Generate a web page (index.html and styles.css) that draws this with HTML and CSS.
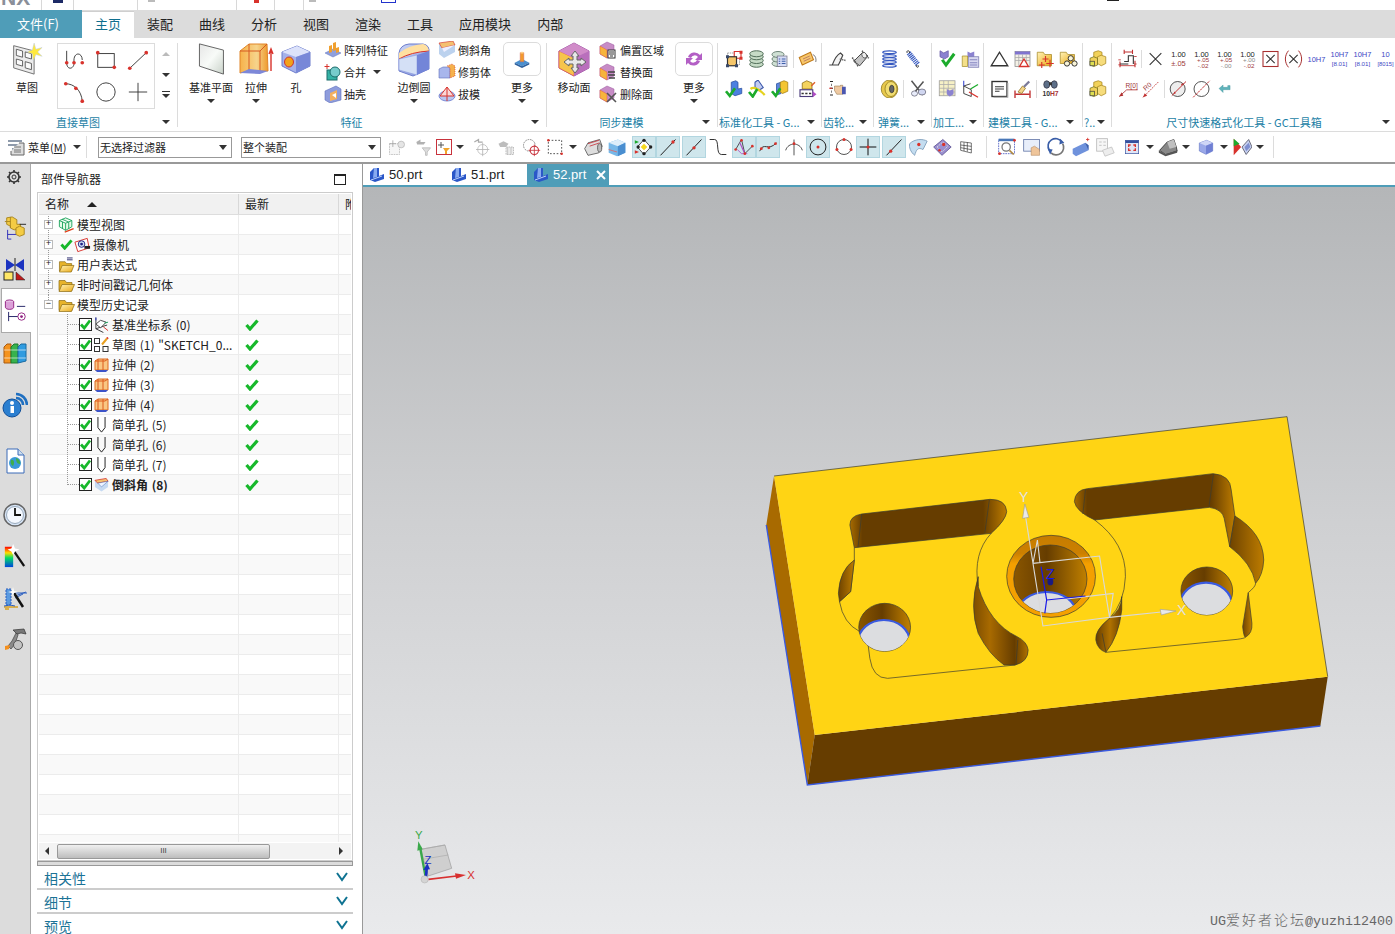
FILE: index.html
```html
<!DOCTYPE html>
<html lang="zh">
<head>
<meta charset="utf-8">
<title>NX</title>
<link rel="stylesheet" href="styles.css">
</head>
<body>
<svg class="defs" aria-hidden="true">
<defs>
<linearGradient id="gO" x1="0" y1="0" x2="1" y2="0"><stop offset="0" stop-color="#f7b24a"/><stop offset=".6" stop-color="#f6d48c"/><stop offset="1" stop-color="#ee9a2c"/></linearGradient>
<linearGradient id="gB" x1="0" y1="0" x2="1" y2="1"><stop offset="0" stop-color="#cdd6f4"/><stop offset="1" stop-color="#7d8fdc"/></linearGradient>
<linearGradient id="gY" x1="0" y1="0" x2="0" y2="1"><stop offset="0" stop-color="#ffe9a0"/><stop offset="1" stop-color="#e2a91c"/></linearGradient>
<linearGradient id="gF" x1="0" y1="0" x2="1" y2="1"><stop offset="0" stop-color="#fff3b8"/><stop offset="1" stop-color="#eba813"/></linearGradient>
<linearGradient id="gP" x1="0" y1="0" x2="1" y2="1"><stop offset="0" stop-color="#e6e6e6"/><stop offset=".5" stop-color="#f8fbf8"/><stop offset="1" stop-color="#c9d2c9"/></linearGradient>
<linearGradient id="gRb" x1="0" y1="0" x2="0" y2="1"><stop offset="0" stop-color="#f00"/><stop offset=".3" stop-color="#fd0"/><stop offset=".55" stop-color="#0d6"/><stop offset="1" stop-color="#04d"/></linearGradient>

<symbol id="sketch" viewBox="0 0 32 36"><path d="M1 3 24 9V35L1 28Z" fill="#ececec" stroke="#666"/><path d="M4 7 11 9V16L4 14ZM14 10 21 12V18L14 16ZM4 18 11 20V26L4 24ZM14 21 21 23V30L14 28Z" fill="#fafafa" stroke="#555"/><path d="M24 0 26 7 33 5 28 10 33 15 26 13 23 20 22 12 16 10 22 8Z" fill="#ffe93c" stroke="#b7c6e6" stroke-width=".5"/></symbol>
<symbol id="g-spline" viewBox="0 0 24 24"><path d="M4 2V15C4 24 13 22 12 14 11 3 21 3 21 12" fill="none" stroke="#333"/><g fill="#d8322c"><circle cx="4" cy="15" r="2"/><circle cx="12" cy="15" r="2"/><circle cx="21" cy="15" r="2"/></g></symbol>
<symbol id="g-rect" viewBox="0 0 24 24"><rect x="3" y="5" width="18" height="15" fill="none" stroke="#333"/><g fill="#d8322c"><circle cx="3" cy="4" r="2"/><circle cx="21" cy="20" r="2"/></g></symbol>
<symbol id="g-line" viewBox="0 0 24 24"><path d="M3 21 21 4" stroke="#333" fill="none"/><g fill="#d8322c"><circle cx="3" cy="21" r="2"/><circle cx="21" cy="4" r="2"/></g></symbol>
<symbol id="g-arc" viewBox="0 0 24 24"><path d="M3 3C12 3 20 10 21 22" stroke="#333" fill="none"/><g fill="#d8322c"><circle cx="3" cy="3" r="2"/><circle cx="14" cy="8" r="2"/><circle cx="21" cy="22" r="2"/></g></symbol>
<symbol id="g-circ" viewBox="0 0 24 24"><circle cx="12" cy="12" r="10" fill="none" stroke="#333"/></symbol>
<symbol id="g-plus" viewBox="0 0 24 24"><path d="M12 2V22M2 12H22" stroke="#333" fill="none"/></symbol>

<symbol id="datum" viewBox="0 0 32 36"><path d="M3 1 30 8V35L3 26Z" fill="url(#gP)" stroke="#555"/></symbol>
<symbol id="extrude" viewBox="0 0 36 36"><path d="M2 10 11 3H29L30 30H11L2 32Z" fill="url(#gO)" stroke="#e0862a"/><path d="M11 3V30M2 10H22L29 3M22 10V31" stroke="#d65a22" fill="none"/><path d="M2 32 11 28 30 30 22 33Z" fill="#7d88d8"/><path d="M33 30V9M31 13 33 8 35 13" stroke="#d8322c" fill="none" stroke-width="1.4"/></symbol>
<symbol id="holeb" viewBox="0 0 32 32"><path d="M2 9 17 3 30 9V23L16 30 2 23Z" fill="#a5b1ea" stroke="#6c7ccc"/><path d="M2 9 16 14 30 9 17 3Z" fill="#dce2fa"/><path d="M16 14V30L30 23V9Z" fill="#7888d8"/><ellipse cx="9" cy="19" rx="4.5" ry="5" fill="#f2a21a" stroke="#c33"/></symbol>
<symbol id="pattern" viewBox="0 0 18 18"><path d="M1 12 9 8 17 12 9 16Z" fill="#8fa0dd" stroke="#5e70bd" stroke-width=".5"/><path d="M5 5 8 4V11L5 12ZM9 2 12 1V9L9 10ZM12 7 15 6V11L12 12Z" fill="#f0a030"/></symbol>
<symbol id="unite" viewBox="0 0 18 18"><rect x="3" y="7" width="10" height="10" fill="#35b3a6" stroke="#1b6c6b"/><circle cx="11" cy="9" r="5" fill="#7cc" stroke="#1b6c6b"/><path d="M3 1V6M.5 3.500H5.500" stroke="#d8322c" fill="none"/></symbol>
<symbol id="shell" viewBox="0 0 18 18"><path d="M1 6 12 1 17 4V15L6 18 1 15Z" fill="#8e9cdc" stroke="#5e70bd" stroke-width=".6"/><path d="M6 8 13 5V14L6 16Z" fill="#f4b060"/><path d="M8 10 12 8V13Z" fill="#fff"/></symbol>
<symbol id="blend" viewBox="0 0 34 36"><path d="M2 12Q3 4 12 3L26 3Q33 4 32 12V28L16 35 2 30Z" fill="url(#gB)" stroke="#6c7ccc"/><path d="M2 12Q12 4 26 3 31 4 32 10 20 10 2 18Z" fill="#ffe0a0"/><path d="M2 18Q14 11 32 10" stroke="#d8322c" fill="none"/><path d="M2 18 20 14V34L2 29Z" fill="#d4e0f6" stroke="#7f8fd8" stroke-width=".5"/><path d="M20 14 32 10V28L20 34Z" fill="#7385d8"/></symbol>
<symbol id="chamfer" viewBox="0 0 18 18"><path d="M1 2 15 0 17 4V11L6 17 1 13Z" fill="#bcd2ee"/><path d="M1 2 15 0 17 4 4 7Z" fill="#f4c070" stroke="#d8322c" stroke-width=".6"/><path d="M4 7 17 4 6 11Z" fill="#eef"/></symbol>
<symbol id="trim" viewBox="0 0 18 18"><path d="M1 6 5 4H12V15H1Z" fill="#a8b6ec" stroke="#5e70bd" stroke-width=".6"/><path d="M9 3 14 1 17 3V13L12 15V5Z" fill="#f5b14d" stroke="#c33" stroke-dasharray="1 1" stroke-width=".6"/></symbol>
<symbol id="draft" viewBox="0 0 18 18"><ellipse cx="9" cy="11" rx="8" ry="5" fill="#b9c6f0" stroke="#7a8bd6"/><path d="M9 2 2 11H16ZM9 2V16" fill="#f9d8d8" stroke="#d8322c"/></symbol>
<symbol id="more1" viewBox="0 0 20 22"><path d="M2 15 10 11 18 15 10 19Z" fill="#4a90d0"/><path d="M2 15 10 19V21L2 17ZM18 15 10 19V21L18 17Z" fill="#2c5e9c"/><path d="M8 4H12V14H8Z" fill="#f39a2c" stroke="#c66" stroke-width=".5"/><ellipse cx="10" cy="4" rx="2" ry="1" fill="#ffcf8a"/></symbol>
<symbol id="move" viewBox="0 0 34 36"><path d="M2 10 17 2 32 10V27L17 35 2 27Z" fill="#dba3cf" stroke="#a055a5"/><path d="M2 10 17 17V35L2 27Z" fill="#f6c54c" stroke="#e25a4a" stroke-width=".7"/><path d="M2 10 17 2 32 10 17 17Z" fill="#d18cc9"/><path d="M32 10V27L17 35V17Z" fill="#b96fbc"/><path d="M18 10 22 15H20V19H24V17L29 21 24 25V23H20V27H22L18 32 14 27H16V23H12V25L7 21 12 17V19H16V15H14Z" fill="#e8e8e8" stroke="#666"/></symbol>
<symbol id="faceA" viewBox="0 0 18 18"><path d="M1 5 8 1 15 4V13L8 17 1 13Z" fill="#c78cc6" stroke="#9a569e" stroke-width=".5"/><path d="M1 5 8 9V17L1 13Z" fill="#f6b43c" stroke="#e25a4a" stroke-width=".5"/><rect x="9" y="9" width="7" height="8" fill="#fff" stroke="#333"/><path d="M10 11H15M10 13H15M11 15H14" stroke="#333" fill="none"/></symbol>
<symbol id="faceB" viewBox="0 0 18 18"><path d="M1 5 8 1 15 4V13L8 17 1 13Z" fill="#c78cc6" stroke="#9a569e" stroke-width=".5"/><path d="M1 5 8 9V17L1 13Z" fill="#f6b43c" stroke="#e25a4a" stroke-width=".5"/><path d="M9 9H16M9 12H16M10 15H16" stroke="#444" stroke-width="1.500" fill="none"/></symbol>
<symbol id="faceC" viewBox="0 0 18 18"><path d="M1 5 8 1 15 4V13L8 17 1 13Z" fill="#c78cc6" stroke="#9a569e" stroke-width=".5"/><path d="M1 5 8 9V17L1 13Z" fill="#f6b43c" stroke="#e25a4a" stroke-width=".5"/><path d="M8 8 17 17M17 8 8 17" stroke="#555" stroke-width="1.600" fill="none"/></symbol>
<symbol id="more2" viewBox="0 0 20 20"><path d="M4 8A7 7 0 0 1 16 6L18 4V11H11L14 8A4 4 0 0 0 7 9ZM16 12A7 7 0 0 1 4 14L2 16V9H9L6 12A4 4 0 0 0 13 11Z" fill="#b35fc5"/></symbol>

<symbol id="st1" viewBox="0 0 24 24"><path d="M4 4H20V20H4Z" fill="none" stroke="#888" stroke-dasharray="2 1"/><path d="M13 2H22V11H13Z" fill="#fff" stroke="#d8322c" stroke-width="1.500"/><rect x="4" y="9" width="12" height="12" fill="#f5c66a" stroke="#333" stroke-width="1.600"/><g fill="#3a4a6a"><rect x="2" y="7" width="4" height="4"/><rect x="14" y="19" width="4" height="4"/><rect x="2" y="19" width="4" height="4"/></g><g fill="#d8322c"><rect x="20" y="1" width="4" height="4"/><rect x="20" y="9" width="4" height="4"/></g></symbol>
<symbol id="st2" viewBox="0 0 24 24"><g fill="#c6dbc6" stroke="#4d6b55" stroke-width="1.300"><ellipse cx="12" cy="19" rx="9" ry="4"/><ellipse cx="12" cy="14" rx="9" ry="4"/><ellipse cx="12" cy="9" rx="9" ry="4"/><ellipse cx="12" cy="5" rx="9" ry="4"/></g></symbol>
<symbol id="st3" viewBox="0 0 24 24"><g fill="#cfe0d4" stroke="#6a8274" stroke-width="1.300"><ellipse cx="10" cy="18" rx="8" ry="4"/><ellipse cx="10" cy="12" rx="8" ry="4"/><ellipse cx="10" cy="6" rx="8" ry="4"/></g><rect x="9" y="8" width="13" height="14" fill="#d6dcf6" stroke="#778"/><path d="M11 12H13M15 12H20M11 15H13M15 15H20M11 18H13M15 18H20" stroke="#3a5da6" stroke-width="1.300" fill="none"/></symbol>
<symbol id="st4" viewBox="0 0 24 24"><path d="M1 10 16 3 20 13 5 20Z" fill="#f8c86a" stroke="#c07a1a" stroke-width="1.400"/><path d="M6 12 15 8M7 15 16 11" stroke="#a66" fill="none"/><path d="M19 6C23 7 24 13 23 16" stroke="#555" fill="none"/></symbol>
<symbol id="st5" viewBox="0 0 24 24"><path d="M9 3 15 1 18 3V12L23 11V18L14 21 9 18Z" fill="#4c80e0" stroke="#2a4e9e"/><path d="M2 15 7 21 14 11" stroke="#1cab2c" stroke-width="3.500" fill="none"/></symbol>
<symbol id="st6" viewBox="0 0 24 24"><path d="M10 3 14 0 21 10 15 14 10 9Z" fill="#c2ccf2" stroke="#3a56a8" stroke-width="1.400"/><path d="M4 12C9 8 17 14 23 20" stroke="#e5d21f" stroke-width="3" fill="none"/><path d="M2 16 7 22 13 12" stroke="#1cab2c" stroke-width="3.500" fill="none"/></symbol>
<symbol id="st7" viewBox="0 0 24 24"><path d="M8 5 14 3V18L8 20Z" fill="#5a86e0" stroke="#2a4e9e"/><path d="M13 3 18 1 23 3V15L16 18 13 16Z" fill="#f4c531" stroke="#a07c10"/><path d="M2 15 7 21 13 11" stroke="#1cab2c" stroke-width="3.500" fill="none"/></symbol>
<symbol id="st8" viewBox="0 0 24 24"><path d="M5 4 11 1 18 4V12H5Z" fill="#f4d35e" stroke="#8a6a12"/><rect x="2" y="13" width="17" height="9" fill="#fff" stroke="#4a3a7a" stroke-width="1.500"/><path d="M4 18H7M9 18H12M14 18H17" stroke="#333" stroke-width="2"/><path d="M19 15 24 19 19 23Z" fill="#b04cc4"/><path d="M17 8 22 3" stroke="#e0602c" stroke-width="2"/></symbol>
<symbol id="ge1" viewBox="0 0 24 24"><path d="M1 20H14M5 20C8 12 12 6 16 4L19 7C17 12 15 17 13 20" fill="#f4f4f4" stroke="#444" stroke-width="1.500"/><path d="M15 12 23 14" stroke="#777" stroke-width="2" stroke-dasharray="2 1"/></symbol>
<symbol id="ge2" viewBox="0 0 24 24"><path d="M3 15 15 3 22 8 11 21Z" fill="#c4c4c4" stroke="#444" stroke-width="1.300"/><path d="M1 10 9 22M14 1 23 11" stroke="#555" fill="none" stroke-width="2" stroke-dasharray="2 1"/><ellipse cx="17" cy="7" rx="3" ry="4" transform="rotate(-30 17 7)" fill="#eee" stroke="#444"/></symbol>
<symbol id="ge3" viewBox="0 0 24 24"><path d="M2 2H6M2 11H6M2 20H6" stroke="#222" stroke-width="1.400" fill="none"/><path d="M4 5V8M4 14V17" stroke="#555"/><path d="M1 11H5" stroke="#d8322c" stroke-width="1.500"/><path d="M8 8H16V7H19V19H11L8 14Z" fill="#eec9a2" stroke="#7a5a30" stroke-width=".6"/><rect x="18" y="9" width="5" height="10" fill="#4a56b0"/></symbol>
<symbol id="sp1" viewBox="0 0 24 24"><g fill="none" stroke="#3558c0" stroke-width="1.800"><ellipse cx="12" cy="3" rx="9" ry="1.800"/><ellipse cx="12" cy="8" rx="9" ry="1.800"/><ellipse cx="12" cy="12" rx="9" ry="1.800"/><ellipse cx="12" cy="16" rx="9" ry="1.800"/><ellipse cx="12" cy="21" rx="9" ry="1.800"/></g></symbol>
<symbol id="sp2" viewBox="0 0 24 24"><path d="M7 4 19 19" stroke="#3558c0" stroke-width="7" stroke-dasharray="1.500 1" fill="none"/><path d="M5 4C3 0 9 0 8 4M19 20C22 24 16 24 17 20" stroke="#333" fill="none" stroke-width="1.300"/></symbol>
<symbol id="sp3" viewBox="0 0 24 24"><ellipse cx="12" cy="12" rx="11" ry="12" fill="#e8c94c" stroke="#8b7418"/><ellipse cx="14" cy="12" rx="8" ry="10" fill="#f2dd70" stroke="#8b7418"/><ellipse cx="15" cy="12" rx="3" ry="5" fill="#666" stroke="#333"/></symbol>
<symbol id="sp4" viewBox="0 0 24 24"><path d="M4 1 19 20M20 2 6 19" stroke="#555" stroke-width="2" fill="none"/><ellipse cx="18" cy="16" rx="5" ry="4" fill="#d0d6f0" stroke="#667"/><ellipse cx="8" cy="18" rx="4" ry="3.500" fill="#e8ecfa" stroke="#667"/></symbol>
<symbol id="ma1" viewBox="0 0 24 24"><path d="M2 1 7 4 13 1V9L8 12 2 9Z" fill="#8b82d0" stroke="#6a5ca6"/><path d="M5 13 10 20 21 5" stroke="#1cab2c" stroke-width="4" fill="none"/></symbol>
<symbol id="ma2" viewBox="0 0 24 24"><path d="M8 2 12 4 17 2V9L12 12 8 9Z" fill="#8b82d0"/><rect x="9" y="9" width="14" height="14" fill="#d8d8f0" stroke="#7a7ab0"/><path d="M1 8H8V22H1Z" fill="#f4e08a" stroke="#a59030"/><path d="M11 13H21M11 17H21M11 20H21" stroke="#6a6ab0"/></symbol>
<symbol id="ma3" viewBox="0 0 24 24"><rect x="1" y="1" width="21" height="20" fill="#f6f0c6" stroke="#999"/><path d="M1 6H22M1 11H22M1 16H22M7 1V21M13 1V21" stroke="#aaa"/><path d="M11 12 15 14 20 12V19L15 22 11 19Z" fill="#8b82d0"/></symbol>
<symbol id="ma4" viewBox="0 0 24 24"><path d="M3 8V18L13 22M3 8 13 13V22M3 8 12 5" fill="none" stroke="#444" stroke-width="1.300"/><path d="M3 1V8" stroke="#2233cc" stroke-width="1.300"/><path d="M12 12 22 6" stroke="#1cab2c" stroke-width="1.800"/><path d="M10 16 22 23" stroke="#d8322c" stroke-width="1.800"/></symbol>
<symbol id="mo1" viewBox="0 0 24 24"><path d="M12 3 23 21H1Z" fill="none" stroke="#333" stroke-width="1.800"/></symbol>
<symbol id="mo2" viewBox="0 0 24 24"><rect x="2" y="2" width="20" height="20" fill="#f3f0e6" stroke="#888"/><rect x="2" y="2" width="20" height="4" fill="#8074d0"/><path d="M2 10H22M2 14H22M7 6V22M12 6V22M17 6V22" stroke="#aaa"/><path d="M14 12 20 22H8Z" fill="#fff" stroke="#d8322c" stroke-width="1.800"/></symbol>
<symbol id="mo3" viewBox="0 0 24 24"><path d="M1 3H9L11 6H20V21H1Z" fill="url(#gF)" stroke="#a68a28"/><path d="M12 8V16M8 12H16M18 13V23M13 18H23M7 16V24M3 20H11" stroke="#d8322c" stroke-width="1.500" fill="none"/></symbol>
<symbol id="mo4" viewBox="0 0 24 24"><path d="M1 3H9L11 6H20V18H1Z" fill="url(#gF)" stroke="#a68a28"/><circle cx="15" cy="11" r="3.500" fill="#f8f4d8" stroke="#333" stroke-width="1.300"/><circle cx="10" cy="18" r="3.500" fill="#f8f4d8" stroke="#333" stroke-width="1.300"/><circle cx="20" cy="18" r="3.500" fill="#f8f4d8" stroke="#333" stroke-width="1.300"/></symbol>
<symbol id="mo5" viewBox="0 0 24 24"><rect x="2" y="2" width="20" height="20" fill="#fff" stroke="#333" stroke-width="1.800"/><path d="M6 9H18M6 12H18M6 15H12" stroke="#333" stroke-width="1.300" fill="none"/><path d="M23 4V23H4" stroke="#aaa" fill="none" stroke-width="1.500"/></symbol>
<symbol id="mo6" viewBox="0 0 24 24"><path d="M2 14V24M22 14V24M3 19H21" stroke="#c03030" stroke-width="1.800"/><path d="M6 16 12 8 16 11 11 18Z" fill="#f2d48a" stroke="#907020"/><path d="M14 9 21 2" stroke="#7a7a9a" stroke-width="3"/></symbol>
<symbol id="mo7" viewBox="0 0 24 24"><ellipse cx="7" cy="6" rx="4" ry="5" fill="#5d6f88" stroke="#334"/><ellipse cx="17" cy="6" rx="4" ry="5" fill="#5d6f88" stroke="#334"/><rect x="10" y="3" width="4" height="4" fill="#333"/><text x="12" y="21" class="t-a" fill="#333" font-size="9" font-weight="700">10<tspan fill="#a33">H7</tspan></text></symbol>
<symbol id="blocks" viewBox="0 0 24 24"><path d="M7 3 13 1 18 3V11L12 13 7 11Z" fill="#f2d25a" stroke="#a8861e"/><path d="M12 9 17 7 23 9V18L17 21 12 18Z" fill="#f6dc7c" stroke="#a8861e"/><path d="M2 11 7 9 12 11V20L7 22 2 20Z" fill="#f2d25a" stroke="#70701e"/><rect x="2" y="15" width="6" height="6" fill="#dde050" stroke="#444"/></symbol>
<symbol id="dim1" viewBox="0 0 24 24"><path d="M3 15V22M21 14V22M8 1V6M18 1V6M8 3.500H18" stroke="#c03030" stroke-width="1.300" fill="none"/><path d="M3 18H13M8 15H13V8H19V18" stroke="#333" fill="none" stroke-width="1.300"/><path d="M1 13H4M1 19H4M3 20H21M20 9H23M20 18H23" stroke="#c03030" fill="none"/></symbol>
<symbol id="dimx" viewBox="0 0 24 24"><path d="M5 5 19 19M19 5 5 19" stroke="#333" stroke-width="1.300" fill="none"/></symbol>
<symbol id="d2" viewBox="0 0 24 24"><text x="12" y="10" class="t-a" fill="#222" font-size="9">1.00</text><text x="12" y="20" class="t-a" fill="#a03a3a" font-size="9">±.05</text></symbol>
<symbol id="d3" viewBox="0 0 24 24"><text x="12" y="9" class="t-a" fill="#222" font-size="9">1.00</text><text x="14" y="16" class="t-a" fill="#a03a3a" font-size="7.500">+.05</text><text x="14" y="23" class="t-a" fill="#a03a3a" font-size="7.500">-.02</text></symbol>
<symbol id="d4" viewBox="0 0 24 24"><text x="12" y="9" class="t-a" fill="#222" font-size="9">1.00</text><text x="14" y="16" class="t-a" fill="#a03a3a" font-size="7.500">+.05</text><text x="14" y="23" class="t-a" fill="#888" font-size="7.500">-.00</text></symbol>
<symbol id="d5" viewBox="0 0 24 24"><text x="12" y="9" class="t-a" fill="#222" font-size="9">1.00</text><text x="14" y="16" class="t-a" fill="#888" font-size="7.500">+.00</text><text x="14" y="23" class="t-a" fill="#a03a3a" font-size="7.500">-.02</text></symbol>
<symbol id="d6" viewBox="0 0 24 24"><rect x="3" y="3" width="18" height="18" fill="#fff" stroke="#a83030" stroke-width="1.300"/><path d="M7 7 17 17M17 7 7 17" stroke="#333" stroke-width="1.300" fill="none"/></symbol>
<symbol id="d7" viewBox="0 0 24 24"><path d="M6 2C1 8 1 16 6 22M18 2C23 8 23 16 18 22" stroke="#a83030" stroke-width="1.200" fill="none"/><path d="M7 7 17 17M17 7 7 17" stroke="#333" stroke-width="1.300" fill="none"/></symbol>
<symbol id="d8" viewBox="0 0 24 24"><text x="12" y="16" class="t-a" fill="#3b48c4" font-size="9">10H7</text></symbol>
<symbol id="d9" viewBox="0 0 24 24"><text x="12" y="10" class="t-a" fill="#3b48c4" font-size="9">10H7</text><text x="12" y="20" class="t-a" fill="#3b48c4" font-size="7.500">[8.01]</text></symbol>
<symbol id="d10" viewBox="0 0 24 24"><text x="12" y="10" class="t-a" fill="#3b48c4" font-size="9">10</text><text x="12" y="20" class="t-a" fill="#3b48c4" font-size="7">[8015]</text></symbol>
<symbol id="r1" viewBox="0 0 24 24"><path d="M2 21 11 13H24" stroke="#b03030" fill="none"/><path d="M2 21 7 20 5 16Z" fill="#b03030"/><text x="17" y="11" class="t-a" fill="#a03a3a" font-size="8">R[0]</text></symbol>
<symbol id="r2" viewBox="0 0 24 24"><path d="M3 22 22 3" stroke="#c03030" stroke-dasharray="2 1" fill="none"/><path d="M3 22 8 20 5 17Z" fill="#c03030"/><text x="10" y="11" class="t-a" fill="#a03a3a" font-size="8" transform="rotate(-40 10 11)">R0</text></symbol>
<symbol id="r3" viewBox="0 0 24 24"><circle cx="11" cy="12" r="9" fill="#eee" stroke="#333"/><path d="M4 20 21 3" stroke="#c03030" fill="none" stroke-width="1.200"/><path d="M6 18 9 17 7 15ZM16 8 19 5 15 6Z" fill="#c03030"/></symbol>
<symbol id="r4" viewBox="0 0 24 24"><circle cx="12" cy="12" r="9" fill="none" stroke="#333"/><path d="M2 22 22 2" stroke="#c03030" fill="none" stroke-dasharray="3 1" stroke-width="1.200"/></symbol>
<symbol id="r5" viewBox="0 0 24 24"><path d="M21 7V14H9V19L2 12 9 6V10H17V7Z" fill="#5fb3bb" stroke="#3c8d98" stroke-width=".6" transform="translate(4 3) scale(.7)"/></symbol>

<symbol id="menu" viewBox="0 0 20 20"><path d="M2 4H16M2 8H13M6 12H15" stroke="#6a7a90" stroke-width="1.600" fill="none"/><path d="M13 6H18V18H5V14" fill="#ddd" stroke="#666"/><path d="M8 10H15M8 13H15M8 15H15" stroke="#777"/></symbol>
<symbol id="t1" viewBox="0 0 24 24"><g opacity=".5"><rect x="3" y="8" width="12" height="13" fill="#eee" stroke="#777" stroke-dasharray="2 1"/><circle cx="17" cy="9" r="4" fill="#ccc" stroke="#777"/><path d="M7 4V12M3 8H11" stroke="#555"/></g></symbol>
<symbol id="t2" viewBox="0 0 24 24"><g opacity=".5"><path d="M4 6 9 3V6H15L13 9H5Z" fill="#666"/><path d="M11 13H21L17 18V22H15V18Z" fill="#bbb" stroke="#777"/></g></symbol>
<symbol id="t3" viewBox="0 0 16 16"><rect x="0.500" y=".5" width="15" height="15" fill="#fff" stroke="#c8323c"/><path d="M5 3V9M2 6H8" stroke="#555"/><path d="M7 9H14L11 12V15H9V12Z" fill="#f2a52a"/></symbol>
<symbol id="t4" viewBox="0 0 24 24"><g opacity=".55"><path d="M4 6 9 3V6H14" stroke="#666" fill="none" stroke-width="1.500"/><circle cx="14" cy="15" r="6" fill="none" stroke="#888"/><path d="M14 7V23M6 15H22" stroke="#777"/></g></symbol>
<symbol id="t5" viewBox="0 0 24 24"><g opacity=".55"><path d="M3 8 9 5 15 8 12 12 5 12Z" fill="#888"/><rect x="12" y="12" width="9" height="9" fill="#ddd" stroke="#777" stroke-dasharray="2 1"/><path d="M14 12V21M18 12V21" stroke="#888"/></g></symbol>
<symbol id="t6" viewBox="0 0 24 24"><circle cx="10" cy="10" r="7" fill="none" stroke="#777" stroke-dasharray="2 1"/><circle cx="16" cy="16" r="5" fill="#fff" stroke="#c8323c" stroke-width="1.300"/><path d="M16 9V23M9 16H23" stroke="#c8323c"/></symbol>
<symbol id="t7" viewBox="0 0 24 24"><rect x="4" y="4" width="16" height="16" fill="none" stroke="#333" stroke-dasharray="2 2"/><g fill="#d8322c"><circle cx="4" cy="4" r="1.500"/><circle cx="20" cy="20" r="1.500"/></g></symbol>
<symbol id="t8" viewBox="0 0 24 24"><path d="M2 14 6 7 20 3 23 11 19 19 6 22Z" fill="#ddd" stroke="#555"/><path d="M6 8 19 4M8 11 20 7" stroke="#c8323c"/><ellipse cx="20" cy="13" rx="2.500" ry="5" fill="#bbb" stroke="#555"/></symbol>
<symbol id="t9" viewBox="0 0 24 24"><path d="M2 7 13 3 22 7V19L12 23 2 19Z" fill="#77b8e8"/><path d="M2 7 13 11 22 7 13 3Z" fill="#ddeefa"/><path d="M13 11V23L22 19V7Z" fill="#4a8ed0"/><path d="M2 15 12 18" stroke="#d66" fill="none"/></symbol>
<symbol id="s1" viewBox="0 0 24 24"><path d="M12 3 20 12 12 21 4 12Z" fill="#fff" stroke="#333"/><circle cx="12" cy="4" r="2" fill="#222"/><circle cx="20" cy="12" r="2" fill="#222"/><circle cx="12" cy="20" r="2" fill="#222"/><circle cx="5" cy="12" r="2" fill="#222"/><path d="M12 8 16 12 12 16 8 12Z" fill="#f5d91e"/><path d="M1 4 6 6 1 8Z" fill="#1cab2c"/><path d="M1 16 6 18 1 20Z" fill="#d8322c"/></symbol>
<symbol id="s2" viewBox="0 0 24 24"><path d="M3 22 21 3" stroke="#222" stroke-width="1.200" fill="none"/><circle cx="18" cy="6" r="2" fill="#d8322c"/></symbol>
<symbol id="s3" viewBox="0 0 24 24"><path d="M3 22 21 3" stroke="#222" stroke-width="1.200" fill="none"/><circle cx="12" cy="13" r="2" fill="#d8322c"/></symbol>
<symbol id="s4" viewBox="0 0 24 24"><path d="M2 3H8C14 3 9 21 16 21H22" stroke="#333" stroke-width="1.200" fill="none"/></symbol>
<symbol id="s5" viewBox="0 0 24 24"><path d="M2 15 9 3 13 20 22 11" stroke="#333" fill="none"/><path d="M4 15 9 20 16 20" stroke="#a94cc4" fill="none"/><path d="M7 7 13 20" stroke="#a94cc4" fill="none" stroke-width="1.400"/><g fill="#d8322c"><circle cx="2" cy="15" r="1.600"/><circle cx="9" cy="4" r="1.600"/><circle cx="13" cy="20" r="1.600"/><circle cx="22" cy="11" r="1.600"/></g></symbol>
<symbol id="s6" viewBox="0 0 24 24"><path d="M2 17C7 5 12 18 22 7" stroke="#333" stroke-width="1.200" fill="none"/><g fill="#d8322c"><circle cx="4" cy="14" r="1.700"/><circle cx="13" cy="13" r="1.700"/><circle cx="21" cy="8" r="1.700"/></g></symbol>
<symbol id="s7" viewBox="0 0 24 24"><path d="M2 16C5 6 19 6 22 16M12 3V22" stroke="#333" fill="none"/><circle cx="12" cy="8" r="1.700" fill="#d8322c"/></symbol>
<symbol id="s8" viewBox="0 0 24 24"><circle cx="12" cy="12" r="9.500" fill="none" stroke="#222" stroke-width="1.200"/><circle cx="12" cy="12" r="1.800" fill="#d8322c"/></symbol>
<symbol id="s9" viewBox="0 0 24 24"><circle cx="12" cy="12" r="9" fill="none" stroke="#333"/><g fill="#d8322c"><circle cx="12" cy="3" r="1.800"/><circle cx="3.500" cy="15" r="1.800"/><circle cx="20.500" cy="15" r="1.800"/></g></symbol>
<symbol id="s10" viewBox="0 0 24 24"><path d="M12 2V22M2 12H22" stroke="#111" stroke-width="1.200" fill="none"/><circle cx="12" cy="12" r="1.800" fill="#d8322c"/></symbol>
<symbol id="s11" viewBox="0 0 24 24"><path d="M3 22 21 3" stroke="#222" stroke-width="1.200" fill="none"/><circle cx="8" cy="17" r="2" fill="#d8322c"/></symbol>
<symbol id="s12" viewBox="0 0 24 24"><path d="M2 8C8 2 18 2 23 5L18 15C12 12 10 15 8 22 3 18 1 12 2 8Z" fill="#c4ddf0" stroke="#7a9ab8"/><circle cx="13" cy="9" r="2" fill="#d8322c"/></symbol>
<symbol id="s13" viewBox="0 0 24 24"><path d="M2 12 13 3 23 12 12 22Z" fill="#9a8fd0" stroke="#5a5090"/><path d="M6 12 13 6 19 11 12 18Z" fill="none" stroke="#ddd" stroke-dasharray="2 1"/><circle cx="14" cy="9" r="2" fill="#d8322c"/><circle cx="9" cy="16" r="1.500" fill="#d8322c"/></symbol>
<symbol id="s14" viewBox="0 0 24 24"><path d="M4 4 20 6V21L4 17Z" fill="#fff" stroke="#333"/><path d="M9 5V18M14 5V19M4 9 20 11M4 13 20 16" stroke="#333"/></symbol>
<symbol id="v1" viewBox="0 0 24 24"><rect x="2" y="3" width="19" height="17" fill="#fff" stroke="#4a5ac0" stroke-dasharray="2 1"/><rect x="2" y="2" width="19" height="3" fill="#4a78b8"/><circle cx="11" cy="12" r="5" fill="none" stroke="#777" stroke-width="1.500"/><path d="M15 16 20 21" stroke="#b08a40" stroke-width="2"/><circle cx="3" cy="20" r="1.700" fill="#d8322c"/><circle cx="21" cy="4" r="1.700" fill="#d8322c"/></symbol>
<symbol id="v2" viewBox="0 0 24 24"><rect x="2" y="3" width="19" height="14" fill="#e8eefa" stroke="#6678a8"/><path d="M11 13V22H21V15L15 11Z" fill="#efc59a" stroke="#a87a50" stroke-width=".6"/></symbol>
<symbol id="v3" viewBox="0 0 24 24"><path d="M4 16A9 9 0 0 1 19 6" fill="none" stroke="#3a5ea8" stroke-width="2"/><path d="M20 8A9 9 0 0 1 6 19" fill="none" stroke="#777" stroke-width="2"/><path d="M17 2 22 7 16 9ZM2 14 8 15 5 21Z" fill="#3a5ea8"/></symbol>
<symbol id="v4" viewBox="0 0 24 24"><path d="M2 14 17 7 21 10 21 16 6 23 2 20Z" fill="#6f92dc"/><path d="M17 7 21 10 21 16Z" fill="#3d5ea8"/><path d="M18 3 22 3M20 1V5" stroke="#d8322c"/></symbol>
<symbol id="v5" viewBox="0 0 24 24"><g opacity=".5"><rect x="2" y="2" width="13" height="15" fill="#eee" stroke="#777"/><path d="M5 6H8M10 6H13M5 10H8M10 10H13" stroke="#777"/><path d="M9 16 20 12 23 19 12 23Z" fill="#ddd" stroke="#888"/></g></symbol>
<symbol id="v6" viewBox="0 0 24 24"><rect x="2" y="2" width="20" height="20" fill="#dfe5f6" stroke="#34509e"/><rect x="2" y="2" width="20" height="4" fill="#34509e"/><g fill="#d8322c"><path d="M6 8H10V10H8V12H6ZM14 8H18V12H16V10H14ZM6 14H8V16H10V18H6ZM16 14H18V18H14V16H16Z"/></g></symbol>
<symbol id="v7" viewBox="0 0 24 24"><path d="M2 16 11 6 19 3 22 12 23 17 9 21Z" fill="#888" stroke="#333"/><path d="M11 6 19 3 22 12 14 14Z" fill="#c0c0c0"/><path d="M1 16 9 21 23 16V19L9 23 1 19Z" fill="#555"/></symbol>
<symbol id="v8" viewBox="0 0 24 24"><path d="M2 6 13 2 22 6V18L12 23 2 18Z" fill="#9aa8e8" stroke="#6a7cc8"/><path d="M2 6 12 10 22 6 13 2Z" fill="#cfd6f6"/><path d="M12 10V23L22 18V6Z" fill="#7080d4"/></symbol>
<symbol id="v9" viewBox="0 0 24 24"><path d="M2 2V22L11 12Z" fill="#d8322c"/><path d="M2 2V11L9 8Z" fill="#1cab2c"/><path d="M12 12 20 3 24 12 17 21Z" fill="#c6d0f0" stroke="#556"/><path d="M15 12 20 7 22 12 17 17Z" fill="#7f8fd0"/></symbol>

<symbol id="si-gear" viewBox="0 0 16 16"><circle cx="8" cy="8" r="5" fill="none" stroke="#333" stroke-width="1.600"/><circle cx="8" cy="8" r="2" fill="none" stroke="#333"/><path d="M8 1V3M8 13V15M1 8H3M13 8H15M3 3 4.500 4.500M11.500 11.500 13 13M13 3 11.500 4.500M4.500 11.500 3 13" stroke="#333" stroke-width="1.600"/></symbol>
<symbol id="si-asm" viewBox="0 0 24 26"><path d="M3 2 9 1 14 4V9L18 9V14L11 15 7 13V11L3 9Z" fill="#f4cc44" stroke="#a8861e"/><path d="M1 6H7M7 1V13" stroke="#a8861e" fill="none"/><path d="M17 11 22 13V20L17 22 13 20V13Z" fill="#f4cc44" stroke="#a8861e"/><path d="M4 15V25M4 20H13M4 25H8" stroke="#2a2ab8" fill="none"/><path d="M17 9H24" stroke="#222"/></symbol>
<symbol id="si-con" viewBox="0 0 24 24"><path d="M3 2 12 8 3 14ZM21 2 12 8 21 14Z" fill="#1b33c0"/><path d="M12 1V14" stroke="#222"/><rect x="1" y="15" width="9" height="8" fill="#ffe766" stroke="#222"/><path d="M13 15 22 23H13Z" fill="#c01a1a" stroke="#222" stroke-width=".5"/></symbol>
<symbol id="si-nav" viewBox="0 0 24 26"><ellipse cx="5" cy="3" rx="4.500" ry="2" fill="#e8c8e8" stroke="#902080"/><path d="M.5 3V9C1 12 9 12 9.500 9V3" fill="#dba0d8" stroke="#902080"/><path d="M13 8H22M4 14V24M4 19H14" stroke="#1a1a60" fill="none"/><circle cx="18" cy="19" r="4" fill="none" stroke="#902080"/><circle cx="18" cy="19" r="1.500" fill="#902080"/></symbol>
<symbol id="si-lib" viewBox="0 0 24 24"><path d="M1 5 4 2H8V21H1Z" fill="#f4931f" stroke="#a85a10"/><path d="M8 5 11 2H15V21H8Z" fill="#37b24d" stroke="#1d7a30"/><path d="M15 5 18 2H23V19L15 21Z" fill="#2f9be0" stroke="#1b6aa0"/><path d="M1 8H8M1 16H8M8 8H15M8 16H15M15 8H23M15 16H23" stroke="#fff" stroke-opacity=".6"/></symbol>
<symbol id="si-info" viewBox="0 0 26 26"><path d="M14 2C20 2 25 7 25 13M14 6C18 6 21 9 21 13" stroke="#1f6fc0" stroke-width="2.500" fill="none"/><circle cx="10" cy="16" r="9" fill="#2b7fd0" stroke="#0f4f9a"/><rect x="8.500" y="14" width="3.500" height="7" fill="#fff"/><circle cx="10" cy="11" r="2" fill="#fff"/></symbol>
<symbol id="si-web" viewBox="0 0 24 26"><path d="M4 1H15L21 7V25H4Z" fill="#fff" stroke="#3a6ab8"/><path d="M15 1V7H21" fill="#cde" stroke="#3a6ab8"/><circle cx="12" cy="15" r="6" fill="#3a9ad8"/><path d="M8 12C11 11 12 15 10 18 8 17 7 14 8 12ZM13 10C16 11 18 14 17 16 14 16 13 13 13 10Z" fill="#3fae4a"/></symbol>
<symbol id="si-clock" viewBox="0 0 24 24"><circle cx="12" cy="12" r="11" fill="#d8e6f8" stroke="#666" stroke-width="1.500"/><circle cx="12" cy="12" r="8.500" fill="#f4f8ff" stroke="#9ab"/><path d="M12 5V12H18" stroke="#111" stroke-width="1.800" fill="none"/></symbol>
<symbol id="si-color" viewBox="0 0 24 26"><rect x="1" y="3" width="9" height="22" fill="url(#gRb)"/><path d="M11 8 22 24" stroke="#111" stroke-width="2.500"/><path d="M22 24 23 25" stroke="#ccc" stroke-width="2"/><path d="M10 0 12 5 17 6 12 8 10 12 8 8 4 6 8 5Z" fill="#fff"/></symbol>
<symbol id="si-mill" viewBox="0 0 24 24"><path d="M3 3H8V19H3Z" fill="#5a9ae0" stroke="#2a5ec0" stroke-dasharray="2 1"/><path d="M1 21H15M2 23H6" stroke="#d8a020" stroke-width="1.500"/><path d="M1 20 7 19 12 20" stroke="#2a5ec0" fill="none"/><path d="M11 7H24M12 10 23 6M12 12 20 8" stroke="#2a5ec0" fill="none"/><path d="M11 7 20 21" stroke="#111" stroke-width="2.500"/><path d="M10 1 11 5 15 6 11 7 10 11 9 7 5 6 9 5Z" fill="#fff"/></symbol>
<symbol id="si-tool" viewBox="0 0 24 24"><path d="M14 4 9 14 5 19 8 22 12 17 15 8Z" fill="#8a8a8a" stroke="#444" stroke-width=".7"/><path d="M10 3 21 2 23 7 18 6 14 7Z" fill="#777" stroke="#333" stroke-width=".7"/><circle cx="15" cy="18" r="4.500" fill="#c4c4c4" stroke="#555"/><path d="M2 19 7 18 6 22 2 23Z" fill="#f5901e"/></symbol>

<symbol id="tc-check" viewBox="0 0 14 12"><path d="M1.500 6 5 10 12.500 1.500" fill="none" stroke="#17b82b" stroke-width="3.200"/></symbol>
<symbol id="tc-box" viewBox="0 0 13 13"><rect x=".5" y=".5" width="12" height="12" fill="#fff" stroke="#222"/><path d="M2 6.500 5.200 10 11 2.500" fill="none" stroke="#17b82b" stroke-width="2.800"/></symbol>
<symbol id="tc-view" viewBox="0 0 18 18"><path d="M8 1 15 4V11L8 15 1 11V4ZM1 4 8 7 15 4M8 7V15M4 2.500 11 5.500M4.500 5.500V13M11.500 5.500V13" fill="#e5fbe7" stroke="#17a058"/><path d="M7 17 17 13" stroke="#e0401c" stroke-width="1.500"/></symbol>
<symbol id="tc-cam" viewBox="0 0 18 16"><path d="M1 5 14 1 16 11 4 15Z" fill="#fff" stroke="#d8322c"/><circle cx="8" cy="7" r="3.500" fill="#cde" stroke="#228"/><circle cx="8" cy="7" r="1.500" fill="#228"/><path d="M11 9H17V12H11Z" fill="#222"/></symbol>
<symbol id="tc-folder" viewBox="0 0 17 15"><path d="M1 3H7L8.500 5H14V13H1Z" fill="#e7b32a" stroke="#8a6a12" stroke-width=".7"/><path d="M1 14 4 7H16.500L13.500 14Z" fill="url(#gF)" stroke="#8a6a12" stroke-width=".7"/></symbol>
<symbol id="tc-folderx" viewBox="0 0 17 17"><path d="M1 5H7L8.500 7H14V15H1Z" fill="#e7b32a" stroke="#8a6a12" stroke-width=".7"/><path d="M1 16 4 9H16.500L13.500 16Z" fill="url(#gF)" stroke="#8a6a12" stroke-width=".7"/><path d="M9 1H15M9 3H15" stroke="#24246a"/></symbol>
<symbol id="tc-csys" viewBox="0 0 16 16"><path d="M2 0V12M2 12 14 8M2 12 10 16" fill="none" stroke="#333"/><path d="M2 7 7 3 13 5 7 11Z" fill="#fff" stroke="#444"/><path d="M10 10 15 14" stroke="#d8322c"/><path d="M2 0V3" stroke="#2233cc"/><path d="M11 6 15 5" stroke="#17a058"/></symbol>
<symbol id="tc-skt" viewBox="0 0 15 15"><rect x=".5" y="1" width="5" height="5" fill="#fff" stroke="#333"/><rect x=".5" y="9" width="5" height="5" fill="#fff" stroke="#333"/><rect x="9" y="9" width="5" height="5" fill="#fff" stroke="#333"/><path d="M8 7 13 1" stroke="#e8a020" stroke-width="2"/><path d="M13 1 14 0" stroke="#d8322c" stroke-width="2"/></symbol>
<symbol id="tc-ext" viewBox="0 0 15 14"><path d="M1 3 4 1H14V12H1Z" fill="#f9c783" stroke="#dd6a20"/><path d="M4 1V12M9 1V12M1 3H11L14 1" stroke="#dd5a1c" fill="none"/><path d="M1 12H14L12 14H3Z" fill="#3d54c8"/></symbol>
<symbol id="tc-hole" viewBox="0 0 12 18"><path d="M2 0V12L6 17 10 12V0" fill="none" stroke="#222" stroke-width="1.100"/></symbol>
<symbol id="tc-chamf" viewBox="0 0 16 16"><path d="M1 3 13 1 15 4V10L8 15 1 10Z" fill="#c6daf2"/><path d="M1 3 13 1 15 4 4 6Z" fill="#f6c270" stroke="#d8322c" stroke-width=".8"/><path d="M4 6 15 4 8 10Z" fill="#eef4ff" stroke="#3a6ab8" stroke-width=".5"/></symbol>
<symbol id="tab-p" viewBox="0 0 16 16"><path d="M5 1H10V9L15 7V12L6 15 1 13V5Z" fill="#2b57c8"/><path d="M5 1H8V10L4 11Z" fill="#88aaf0"/><path d="M2 13 13 9" stroke="#bcd0fa"/></symbol>
</defs>
</svg>

<div class="app">
  <div class="qat">
    <span class="nx">NX</span><i class="qs m1"></i><i class="qb navy"></i><i class="qs m2"></i><i class="qs m3"></i><i class="qb lg m4"></i><i class="qs m5"></i><i class="qb red m6"></i><i class="qs m7"></i><i class="qs m8"></i><i class="qb lg m9"></i><i class="qb blue m10"></i><i class="qb blk m11"></i>
  </div>

  <div class="tabbar">
    <div class="file">文件(F)</div>
    <div class="tab on">主页</div><div class="tab">装配</div><div class="tab">曲线</div><div class="tab">分析</div><div class="tab">视图</div><div class="tab">渲染</div><div class="tab">工具</div><div class="tab">应用模块</div><div class="tab">内部</div>
  </div>

  <div class="ribbon">
    <section class="group w1">
      <div class="gbody">
        <div class="big b54"><svg class="i32"><use href="#sketch"/></svg><span class="bl">草图</span></div>
        <div class="gallery">
          <svg class="i22"><use href="#g-spline"/></svg><svg class="i22"><use href="#g-rect"/></svg><svg class="i22"><use href="#g-line"/></svg>
          <svg class="i22"><use href="#g-arc"/></svg><svg class="i22"><use href="#g-circ"/></svg><svg class="i22"><use href="#g-plus"/></svg>
        </div>
        <div class="gscroll"><b class="up"></b><b class="dn"></b><b class="dn bar"></b></div>
      </div>
      <div class="glabel"><span>直接草图</span><b class="dn"></b></div>
    </section>

    <section class="group w2">
      <div class="gbody">
        <div class="big b50 ml8"><svg class="i32"><use href="#datum"/></svg><span class="bl">基准平面</span><b class="dn"></b></div>
        <div class="big b40"><svg class="i36"><use href="#extrude"/></svg><span class="bl">拉伸</span><b class="dn"></b></div>
        <div class="big b40"><svg class="i32"><use href="#holeb"/></svg><span class="bl">孔</span></div>
        <div class="smalls s72 ml8">
          <div class="sm"><svg class="i18"><use href="#pattern"/></svg><span>阵列特征</span></div>
          <div class="sm"><svg class="i18"><use href="#unite"/></svg><span>合并</span><b class="dn ml11"></b></div>
          <div class="sm"><svg class="i18"><use href="#shell"/></svg><span>抽壳</span></div>
        </div>
        <div class="big b36"><svg class="i36"><use href="#blend"/></svg><span class="bl">边倒圆</span><b class="dn"></b></div>
        <div class="smalls s62 ml6">
          <div class="sm"><svg class="i18"><use href="#chamfer"/></svg><span>倒斜角</span></div>
          <div class="sm"><svg class="i18"><use href="#trim"/></svg><span>修剪体</span></div>
          <div class="sm"><svg class="i18"><use href="#draft"/></svg><span>拔模</span></div>
        </div>
        <div class="big b38 ml3"><div class="morebox"><svg class="i20"><use href="#more1"/></svg></div><span class="bl">更多</span><b class="dn"></b></div>
      </div>
      <div class="glabel"><span>特征</span><b class="dn"></b></div>
    </section>

    <section class="group w3">
      <div class="gbody">
        <div class="big b54 ml0"><svg class="i36"><use href="#move"/></svg><span class="bl">移动面</span></div>
        <div class="smalls s72 ml0b">
          <div class="sm wide"><svg class="i18"><use href="#faceA"/></svg><span>偏置区域</span></div>
          <div class="sm wide"><svg class="i18"><use href="#faceB"/></svg><span>替换面</span></div>
          <div class="sm wide"><svg class="i18"><use href="#faceC"/></svg><span>删除面</span></div>
        </div>
        <div class="big b38 ml1"><div class="morebox"><svg class="i20"><use href="#more2"/></svg></div><span class="bl">更多</span><b class="dn"></b></div>
      </div>
      <div class="glabel"><span>同步建模</span><b class="dn"></b></div>
    </section>

    <section class="group w4 pl4">
      <div class="gbody col">
        <div class="irow"><svg class="ic"><use href="#st1"/></svg><svg class="ic"><use href="#st2"/></svg><svg class="ic"><use href="#st3"/></svg><i class="vs"></i><svg class="ic"><use href="#st4"/></svg></div>
        <div class="irow"><svg class="ic"><use href="#st5"/></svg><svg class="ic"><use href="#st6"/></svg><svg class="ic"><use href="#st7"/></svg><i class="vs"></i><svg class="ic"><use href="#st8"/></svg></div>
      </div>
      <div class="glabel tight"><span>标准化工具 - G...</span><b class="dn"></b></div>
    </section>

    <section class="group w5 pl4">
      <div class="gbody col">
        <div class="irow"><svg class="ic"><use href="#ge1"/></svg><svg class="ic"><use href="#ge2"/></svg></div>
        <div class="irow"><svg class="ic"><use href="#ge3"/></svg></div>
      </div>
      <div class="glabel tight"><span>齿轮...</span><b class="dn"></b></div>
    </section>

    <section class="group w6 pl4">
      <div class="gbody col">
        <div class="irow"><svg class="ic"><use href="#sp1"/></svg><svg class="ic"><use href="#sp2"/></svg></div>
        <div class="irow"><svg class="ic"><use href="#sp3"/></svg><i class="vs"></i><svg class="ic"><use href="#sp4"/></svg></div>
      </div>
      <div class="glabel tight"><span>弹簧...</span><b class="dn"></b></div>
    </section>

    <section class="group w7 pl4">
      <div class="gbody col">
        <div class="irow"><svg class="ic"><use href="#ma1"/></svg><svg class="ic"><use href="#ma2"/></svg></div>
        <div class="irow"><svg class="ic"><use href="#ma3"/></svg><svg class="ic"><use href="#ma4"/></svg></div>
      </div>
      <div class="glabel tight"><span>加工...</span><b class="dn"></b></div>
    </section>

    <section class="group w8 pl4">
      <div class="gbody col">
        <div class="irow"><svg class="ic"><use href="#mo1"/></svg><svg class="ic"><use href="#mo2"/></svg><svg class="ic"><use href="#mo3"/></svg><svg class="ic"><use href="#mo4"/></svg></div>
        <div class="irow"><svg class="ic"><use href="#mo5"/></svg><svg class="ic"><use href="#mo6"/></svg><i class="vs"></i><svg class="ic"><use href="#mo7"/></svg></div>
      </div>
      <div class="glabel tight"><span>建模工具 - G...</span><b class="dn"></b></div>
    </section>

    <section class="group w9 pl3">
      <div class="gbody col">
        <div class="irow"><svg class="ic"><use href="#blocks"/></svg></div>
        <div class="irow"><svg class="ic"><use href="#blocks"/></svg></div>
      </div>
      <div class="glabel tight"><span>?..</span><b class="dn"></b></div>
    </section>

    <section class="group w10 pl4">
      <div class="gbody col">
        <div class="irow"><svg class="ic"><use href="#dim1"/></svg><i class="vs"></i><svg class="ic"><use href="#dimx"/></svg><svg class="ic"><use href="#d2"/></svg><svg class="ic"><use href="#d3"/></svg><svg class="ic"><use href="#d4"/></svg><svg class="ic"><use href="#d5"/></svg><svg class="ic"><use href="#d6"/></svg><svg class="ic"><use href="#d7"/></svg><svg class="ic"><use href="#d8"/></svg><svg class="ic"><use href="#d9"/></svg><svg class="ic"><use href="#d9"/></svg><svg class="ic"><use href="#d10"/></svg></div>
        <div class="irow"><svg class="ic"><use href="#r1"/></svg><svg class="ic"><use href="#r2"/></svg><i class="vs"></i><svg class="ic"><use href="#r3"/></svg><svg class="ic"><use href="#r4"/></svg><svg class="ic"><use href="#r5"/></svg></div>
      </div>
      <div class="glabel"><span>尺寸快速格式化工具 - GC工具箱</span><b class="dn"></b></div>
    </section>
  </div>

  <div class="toolbar">
    <svg class="i20 menuic"><use href="#menu"/></svg>
    <span class="menutxt">菜单(<u>M</u>)</span><b class="dn ml4"></b>
    <i class="tsep ml9"></i>
    <div class="combo c1">无选择过滤器<b class="dn"></b></div>
    <div class="combo c2">整个装配<b class="dn"></b></div>
    <div class="tb ml4"><svg class="i20"><use href="#t1"/></svg></div>
    <div class="tb ml2"><svg class="i20"><use href="#t2"/></svg></div>
    <div class="tb w18"><svg class="i16"><use href="#t3"/></svg></div>
    <div class="tb w14"><b class="dn"></b></div>
    <div class="tb ml2"><svg class="i20"><use href="#t4"/></svg></div>
    <div class="tb ml1"><svg class="i20"><use href="#t5"/></svg></div>
    <div class="tb ml1"><svg class="i20"><use href="#t6"/></svg></div>
    <div class="tb"><svg class="i20"><use href="#t7"/></svg></div>
    <div class="tb w12"><b class="dn"></b></div>
    <div class="tb ml2"><svg class="i20"><use href="#t8"/></svg></div>
    <div class="tb"><svg class="i20"><use href="#t9"/></svg></div>
    <div class="tb ml3 hi"><svg class="i20"><use href="#s1"/></svg></div>
    <div class="tb hi"><svg class="i20"><use href="#s2"/></svg></div>
    <div class="tb ml2 hi"><svg class="i20"><use href="#s3"/></svg></div>
    <div class="tb"><svg class="i20"><use href="#s4"/></svg></div>
    <div class="tb ml2 hi"><svg class="i20"><use href="#s5"/></svg></div>
    <div class="tb hi"><svg class="i20"><use href="#s6"/></svg></div>
    <div class="tb ml2"><svg class="i20"><use href="#s7"/></svg></div>
    <div class="tb hi"><svg class="i20"><use href="#s8"/></svg></div>
    <div class="tb ml2"><svg class="i20"><use href="#s9"/></svg></div>
    <div class="tb hi"><svg class="i20"><use href="#s10"/></svg></div>
    <div class="tb ml2 hi"><svg class="i20"><use href="#s11"/></svg></div>
    <div class="tb"><svg class="i20"><use href="#s12"/></svg></div>
    <div class="tb"><svg class="i20"><use href="#s13"/></svg></div>
    <div class="tb"><svg class="i16"><use href="#s14"/></svg></div>
    <i class="tsep ml8"></i>
    <div class="tb ml8"><svg class="i20"><use href="#v1"/></svg></div>
    <div class="tb ml1"><svg class="i20"><use href="#v2"/></svg></div>
    <div class="tb"><svg class="i20"><use href="#v3"/></svg></div>
    <div class="tb ml1"><svg class="i20"><use href="#v4"/></svg></div>
    <div class="tb"><svg class="i20"><use href="#v5"/></svg></div>
    <div class="tb ml3"><svg class="i16"><use href="#v6"/></svg></div>
    <div class="tb w12"><b class="dn"></b></div>
    <div class="tb"><svg class="i20"><use href="#v7"/></svg></div>
    <div class="tb w12"><b class="dn"></b></div>
    <div class="tb ml2"><svg class="i16"><use href="#v8"/></svg></div>
    <div class="tb w12"><b class="dn"></b></div>
    <div class="tb"><svg class="i20"><use href="#v9"/></svg></div>
    <div class="tb w12"><b class="dn"></b></div>
    <i class="tsep ml7"></i>
  </div>

  <div class="main">
    <nav class="rail">
      <div class="rg"><svg class="i16"><use href="#si-gear"/></svg></div>
      <div class="ri top1"><svg class="i24"><use href="#si-asm"/></svg></div>
      <div class="ri"><svg class="i24"><use href="#si-con"/></svg></div>
      <div class="ri act"><svg class="i24"><use href="#si-nav"/></svg></div>
      <div class="ri"><svg class="i24"><use href="#si-lib"/></svg></div>
      <div class="ri t2"><svg class="i26"><use href="#si-info"/></svg></div>
      <div class="ri t3"><svg class="i26"><use href="#si-web"/></svg></div>
      <div class="ri t4"><svg class="i24"><use href="#si-clock"/></svg></div>
      <div class="ri"><svg class="i24"><use href="#si-color"/></svg></div>
      <div class="ri t5"><svg class="i24"><use href="#si-mill"/></svg></div>
      <div class="ri"><svg class="i24"><use href="#si-tool"/></svg></div>
    </nav>

    <aside class="nav">
      <div class="navhead"><span>部件导航器</span><i class="maxi"></i></div>
      <div class="treebox">
        <div class="thead"><div class="c1h">名称<i class="sortup"></i></div><div class="c2h">最新</div><div class="c3h">附</div></div>
        <div class="rows">
          <div class="row"><div class="cn"><i class="tl tv0"></i><i class="exp">+</i><svg class="ti"><use href="#tc-view"/></svg><span class="tt">模型视图</span></div><div class="cl"></div><div class="cx"></div></div>
          <div class="row"><div class="cn"><i class="tl tv0"></i><i class="exp">+</i><svg class="tchk"><use href="#tc-check"/></svg><svg class="ti"><use href="#tc-cam"/></svg><span class="tt">摄像机</span></div><div class="cl"></div><div class="cx"></div></div>
          <div class="row"><div class="cn"><i class="tl tv0"></i><i class="exp">+</i><svg class="ti"><use href="#tc-folderx"/></svg><span class="tt">用户表达式</span></div><div class="cl"></div><div class="cx"></div></div>
          <div class="row"><div class="cn"><i class="tl tv0"></i><i class="exp">+</i><svg class="ti"><use href="#tc-folder"/></svg><span class="tt">非时间戳记几何体</span></div><div class="cl"></div><div class="cx"></div></div>
          <div class="row"><div class="cn"><i class="tl tv0 end"></i><i class="exp">−</i><svg class="ti"><use href="#tc-folder"/></svg><span class="tt">模型历史记录</span></div><div class="cl"></div><div class="cx"></div></div>
          <div class="row"><div class="cn ch"><i class="tl tv1"></i><svg class="cb"><use href="#tc-box"/></svg><svg class="fi"><use href="#tc-csys"/></svg><span class="tt">基准坐标系 (0)</span></div><div class="cl"><svg class="ok"><use href="#tc-check"/></svg></div><div class="cx"></div></div>
          <div class="row"><div class="cn ch"><i class="tl tv1"></i><svg class="cb"><use href="#tc-box"/></svg><svg class="fi"><use href="#tc-skt"/></svg><span class="tt">草图 (1) "SKETCH_0...</span></div><div class="cl"><svg class="ok"><use href="#tc-check"/></svg></div><div class="cx"></div></div>
          <div class="row"><div class="cn ch"><i class="tl tv1"></i><svg class="cb"><use href="#tc-box"/></svg><svg class="fi"><use href="#tc-ext"/></svg><span class="tt">拉伸 (2)</span></div><div class="cl"><svg class="ok"><use href="#tc-check"/></svg></div><div class="cx"></div></div>
          <div class="row"><div class="cn ch"><i class="tl tv1"></i><svg class="cb"><use href="#tc-box"/></svg><svg class="fi"><use href="#tc-ext"/></svg><span class="tt">拉伸 (3)</span></div><div class="cl"><svg class="ok"><use href="#tc-check"/></svg></div><div class="cx"></div></div>
          <div class="row"><div class="cn ch"><i class="tl tv1"></i><svg class="cb"><use href="#tc-box"/></svg><svg class="fi"><use href="#tc-ext"/></svg><span class="tt">拉伸 (4)</span></div><div class="cl"><svg class="ok"><use href="#tc-check"/></svg></div><div class="cx"></div></div>
          <div class="row"><div class="cn ch"><i class="tl tv1"></i><svg class="cb"><use href="#tc-box"/></svg><svg class="fi"><use href="#tc-hole"/></svg><span class="tt">简单孔 (5)</span></div><div class="cl"><svg class="ok"><use href="#tc-check"/></svg></div><div class="cx"></div></div>
          <div class="row"><div class="cn ch"><i class="tl tv1"></i><svg class="cb"><use href="#tc-box"/></svg><svg class="fi"><use href="#tc-hole"/></svg><span class="tt">简单孔 (6)</span></div><div class="cl"><svg class="ok"><use href="#tc-check"/></svg></div><div class="cx"></div></div>
          <div class="row"><div class="cn ch"><i class="tl tv1"></i><svg class="cb"><use href="#tc-box"/></svg><svg class="fi"><use href="#tc-hole"/></svg><span class="tt">简单孔 (7)</span></div><div class="cl"><svg class="ok"><use href="#tc-check"/></svg></div><div class="cx"></div></div>
          <div class="row"><div class="cn ch"><i class="tl tv1 end"></i><svg class="cb"><use href="#tc-box"/></svg><svg class="fi"><use href="#tc-chamf"/></svg><span class="tt strong">倒斜角 (8)</span></div><div class="cl"><svg class="ok"><use href="#tc-check"/></svg></div><div class="cx"></div></div>
          <div class="row"><div class="cn"></div><div class="cl"></div><div class="cx"></div></div><div class="row"><div class="cn"></div><div class="cl"></div><div class="cx"></div></div><div class="row"><div class="cn"></div><div class="cl"></div><div class="cx"></div></div><div class="row"><div class="cn"></div><div class="cl"></div><div class="cx"></div></div>
          <div class="row"><div class="cn"></div><div class="cl"></div><div class="cx"></div></div><div class="row"><div class="cn"></div><div class="cl"></div><div class="cx"></div></div><div class="row"><div class="cn"></div><div class="cl"></div><div class="cx"></div></div><div class="row"><div class="cn"></div><div class="cl"></div><div class="cx"></div></div>
          <div class="row"><div class="cn"></div><div class="cl"></div><div class="cx"></div></div><div class="row"><div class="cn"></div><div class="cl"></div><div class="cx"></div></div><div class="row"><div class="cn"></div><div class="cl"></div><div class="cx"></div></div><div class="row"><div class="cn"></div><div class="cl"></div><div class="cx"></div></div>
          <div class="row"><div class="cn"></div><div class="cl"></div><div class="cx"></div></div><div class="row"><div class="cn"></div><div class="cl"></div><div class="cx"></div></div><div class="row"><div class="cn"></div><div class="cl"></div><div class="cx"></div></div><div class="row"><div class="cn"></div><div class="cl"></div><div class="cx"></div></div>
          <div class="row"><div class="cn"></div><div class="cl"></div><div class="cx"></div></div><div class="row"><div class="cn"></div><div class="cl"></div><div class="cx"></div></div>
        </div>
        <div class="hscroll"><b class="al"></b><div class="thumb"><span>III</span></div><b class="ar"></b></div>
      </div>
      <div class="split"></div>
      <div class="sect"><span>相关性</span><svg class="chev" viewBox="0 0 12 10"><path d="M1 1 6 8 11 1"/></svg></div>
      <div class="sect"><span>细节</span><svg class="chev" viewBox="0 0 12 10"><path d="M1 1 6 8 11 1"/></svg></div>
      <div class="sect"><span>预览</span><svg class="chev" viewBox="0 0 12 10"><path d="M1 1 6 8 11 1"/></svg></div>
    </aside>

    <div class="work">
      <div class="ftabs">
        <div class="ftab"><svg class="i16"><use href="#tab-p"/></svg><span>50.prt</span></div>
        <div class="ftab"><svg class="i16"><use href="#tab-p"/></svg><span>51.prt</span></div>
        <div class="ftab act"><svg class="i16"><use href="#tab-p"/></svg><span>52.prt</span><svg class="closex" viewBox="0 0 10 10"><path d="M1 1 9 9M9 1 1 9"/></svg></div>
      </div>
      <div class="view">
        <svg class="scene" viewBox="363 187 1032 747" preserveAspectRatio="none">
          <defs>
            <linearGradient id="wA" x1="0" x2="1" y1="0" y2="0"><stop offset="0" stop-color="#a86c00"/><stop offset=".08" stop-color="#663d00"/><stop offset=".85" stop-color="#663d00"/><stop offset="1" stop-color="#bd7c00"/></linearGradient>
            <linearGradient id="wB" x1="0" x2="1" y1="0" y2="0"><stop offset="0" stop-color="#6e4300"/><stop offset="1" stop-color="#bd7c00"/></linearGradient>
            <linearGradient id="wC" x1="0" x2="1" y1="0" y2="0"><stop offset="0" stop-color="#7d4d00"/><stop offset=".3" stop-color="#a86a00"/><stop offset=".75" stop-color="#663d00"/><stop offset="1" stop-color="#b07200"/></linearGradient>
            <linearGradient id="wD" x1="0" x2="1" y1="0" y2="0"><stop offset="0" stop-color="#663d00"/><stop offset=".55" stop-color="#b07200"/><stop offset="1" stop-color="#6e4300"/></linearGradient>
            <linearGradient id="wH" x1="0" x2="1" y1="0" y2="0"><stop offset="0" stop-color="#8a5600"/><stop offset=".45" stop-color="#663d00"/><stop offset="1" stop-color="#c08000"/></linearGradient>
            <linearGradient id="wK" x1="0" x2="0" y1="0" y2="1"><stop offset="0" stop-color="#c67c00"/><stop offset=".22" stop-color="#cc8000"/><stop offset=".35" stop-color="#f4a000"/><stop offset="1" stop-color="#f4a000"/></linearGradient>
            <clipPath id="cL"><ellipse cx="337" cy="652" rx="70" ry="72"/></clipPath>
            <clipPath id="cR"><ellipse cx="1208" cy="543" rx="70" ry="72"/></clipPath>
            <clipPath id="cC"><ellipse cx="785" cy="507" rx="99" ry="102"/></clipPath>
          </defs>
          <g transform="translate(760 410) scale(.36986 .33333)">
            <path d="M38 198 17 345 128 1125 148 975Z" fill="#a86a00"/>
            <path d="M148 975 1535 800 1515 948 128 1125Z" fill="#663d00"/>
            <path d="M38 198 1425 20 1535 800 148 975Z" fill="#ffd414"/>
            <g class="edge">
              <path d="M38 198 1425 20 1535 800"/>
              <path d="M255 413V450L245 545 215 575Q225 640 270 665L290 685 297 745Q305 805 345 805L690 765"/>
              <path d="M935 727 1290 688Q1310 685 1312 682M1340 520Q1340 530 1320 548"/>
              <path fill="url(#wA)" d="M255 413 243 345Q243 318 275 312L622 268Q665 268 667 305 665 330 625 370Z"/>
              <path fill="url(#wB)" d="M255 450Q215 480 212 550L215 575 245 545Z"/>
              <path fill="url(#wC)" d="M590 500Q565 590 590 670 620 735 660 765L690 765Q725 755 725 720 722 695 695 680 620 640 590 530Z"/>
              <path fill="url(#wD)" d="M978 560Q978 600 945 625 905 660 908 690 912 718 935 727 970 680 978 600Z"/>
              <path fill="url(#wA)" d="M885 236 1225 191Q1272 195 1274 240L1284 318 1270 410 1255 325Q1250 298 1215 292L905 330Q855 305 850 275 852 240 885 236Z"/>
              <path fill="url(#wB)" d="M1284 318Q1360 370 1362 450 1360 495 1340 520 1330 460 1270 410Z"/>
              <path fill="url(#wB)" d="M1320 548 1305 650Q1308 680 1312 682 1332 670 1330 640Z"/>
              <path d="M625 370Q575 430 590 530M905 330Q990 400 988 500 985 580 945 625"/>
              <path d="M620 270 608 368M275 312 265 412M880 238 873 312M1226 192 1214 290M697 690 692 765M925 670 935 725"/>
              <ellipse cx="337" cy="652" rx="70" ry="72" fill="url(#wH)"/>
              <ellipse cx="1208" cy="543" rx="70" ry="72" fill="url(#wH)"/>
              <ellipse cx="787" cy="499" rx="120" ry="123" fill="url(#wK)"/>
              <ellipse cx="785" cy="507" rx="99" ry="102" fill="url(#wH)"/>
            </g>
            <g class="floor">
              <ellipse clip-path="url(#cL)" cx="335" cy="696" rx="70" ry="66"/>
              <ellipse clip-path="url(#cR)" cx="1206" cy="584" rx="70" ry="66"/>
              <ellipse clip-path="url(#cC)" cx="775" cy="612" rx="80" ry="66"/>
            </g>
            <path class="blue" d="M17 345 128 1125 1515 948"/>
            <g class="wcs">
              <path d="M718 320 765 648M738 460 918 438 945 622 765 648ZM738 460 750 390 757 458M765 575 955 550 945 622M945 622 1085 606"/>
            </g>
            <path class="wb" d="M760 470 775 570 770 610M775 570 880 558"/>
            <path class="cone" d="M716 282 727 322 710 325Z"/>
            <path class="cone" d="M1125 603 1082 598 1085 615Z"/>
            <ellipse cx="785" cy="515" rx="8" ry="11" fill="#1a1a80"/>
          </g>
          <text class="ax-w" x="1019" y="502">Y</text>
          <text class="ax-w" x="1177" y="615">X</text>
          <text class="ax-b" x="1046" y="579">Z</text>
          <g transform="translate(400 820) scale(.3333)">
            <path d="M62 88 135 75 155 145 85 168Z" fill="#cfcfcf" stroke="#9a9a9a" stroke-width="2"/>
            <path d="M62 88 135 75M68 118 145 105" stroke="#aaa" stroke-width="2" fill="none"/>
            <path d="M77 172 60 80" stroke="#3aa84a" stroke-width="7"/><path d="M52 92 55 64 68 88Z" fill="#3aa84a"/>
            <path d="M78 172 80 145" stroke="#1a30c0" stroke-width="8"/><path d="M70 150 82 130 90 148Z" fill="#1a30c0"/>
            <path d="M85 178 170 168" stroke="#d83030" stroke-width="5"/><path d="M165 160 198 165 168 176Z" fill="#d83030"/>
            <circle cx="74" cy="178" r="11" fill="#d4d4d4" stroke="#999"/>
            <text x="56" y="56" font-size="34" class="t-a" fill="#3aa84a">Y</text>
            <text x="84" y="132" font-size="34" class="t-a" fill="#1a30c0">Z</text>
            <text x="213" y="176" font-size="34" class="t-a" fill="#d83030">X</text>
          </g>
        </svg>
        <div class="water">UG<span>爱好者论坛</span>@yuzhi12400</div>
      </div>
    </div>
  </div>
</div>
</body>
</html>
```

FILE: styles.css
```css
* { box-sizing: border-box; }
html, body { margin: 0; padding: 0; height: 100%; background: #fff; }
body { font-family: "Noto Sans CJK SC", "Liberation Sans", sans-serif; font-size: 11px; color: #222; overflow: hidden; }
i, b { display: block; font-style: normal; font-weight: normal; }
svg { display: block; flex: none; }
.defs { position: absolute; width: 0; height: 0; }
.t-a { font-family: "Liberation Sans", sans-serif; text-anchor: middle; }
.app { width: 1395px; height: 934px; display: flex; flex-direction: column; overflow: hidden; }

/* quick access strip (cropped by the top of the screen) */
.qat { height: 10px; flex: none; display: flex; overflow: hidden; background: #fff; }
.nx { width: 41px; margin-top: -12px; height: 20px; font: 700 21px/20px "Liberation Sans", sans-serif; color: #8a8f99; padding-left: 1px; }
.qs { width: 1px; height: 10px; background: #d8d8d8; }
.qb { height: 3px; }
.navy { width: 10px; margin-left: 11px; background: #1d2a66; }
.m1 { margin-left: 0; }
.m2 { margin-left: 10px; }
.m3 { margin-left: 63px; }
.lg { width: 7px; height: 2px; background: #bbb; }
.m4 { margin-left: 10px; }
.m5 { margin-left: 81px; }
.red { width: 5px; background: #d8322c; }
.m6 { margin-left: 17px; }
.m7 { margin-left: 15px; }
.m8 { margin-left: 28px; }
.m9 { margin-left: 5px; }
.blue { width: 15px; height: 3px; border: 1px solid #2233cc; border-top: 0; background: #fff; }
.m10 { margin-left: 65px; }
.blk { width: 12px; height: 1px; background: #222; }
.m11 { margin-left: 711px; }

/* tabs */
.tabbar { height: 28px; flex: none; display: flex; background: #dcdcdc; font-size: 13px; line-height: 28px; }
.file { width: 82px; padding-left: 17px; background: #4f9db8; color: #fff; }
.tab { padding: 0 13px; color: #222; }
.tab.on { background: #fff; color: #0f6f8e; margin-top: 1px; line-height: 24px; border-top: 1px solid #cfcfcf; }

/* ribbon */
.ribbon { height: 94px; flex: none; display: flex; padding-top: 5px; background: #fff; border-bottom: 1px solid #dcdcdc; }
.group { height: 84px; border-right: 1px solid #dcdcdc; display: flex; flex-direction: column; flex: none; }
.w1 { width: 178px; } .w2 { width: 369px; } .w3 { width: 171px; } .w4 { width: 104px; } .w5 { width: 52px; } .w6 { width: 58px; } .w7 { width: 52px; } .w8 { width: 99px; } .w9 { width: 29px; } .w10 { flex: 1; border-right: 0; }
.pl4 .gbody { padding-left: 4px; }
.pl3 .gbody { padding-left: 3px; }
.gbody { height: 73px; display: flex; flex: none; }
.gbody.col { flex-direction: column; padding-top: 1px; }
.glabel { display: flex; align-items: center; height: 12px; line-height: 12px; color: #1c7fa6; font-size: 11px; padding-right: 7px; }
.glabel span { flex: 1; text-align: center; white-space: nowrap; }
.glabel .dn { margin-left: 6px; }
.glabel.tight { padding-left: 1px; padding-right: 6px; }
.glabel.tight span { text-align: left; }
.glabel.tight .dn { margin-left: 2px; }
.w5 .glabel.tight, .w6 .glabel.tight, .w7 .glabel.tight { padding-right: 6px; }
.w6 .glabel { padding-left: 4px; }
.w8 .glabel { padding-left: 4px; padding-right: 8px; }
.w9 .glabel.tight { padding-right: 7px; }
.dn { width: 0; height: 0; border-left: 4px solid transparent; border-right: 4px solid transparent; border-top: 4px solid #333; flex: none; }
.up { width: 0; height: 0; border-left: 4px solid transparent; border-right: 4px solid transparent; border-bottom: 4px solid #bbb; }
.big { display: flex; flex-direction: column; align-items: center; flex: none; }
.big > svg, .morebox { height: 32px; flex: none; }
.i36 { width: 36px; height: 36px; margin-top: -2px; margin-bottom: -2px; }
.big > .i36 { height: 36px; }
.i32 { width: 32px; height: 32px; }
.i26 { width: 26px; height: 26px; }
.i24 { width: 24px; height: 24px; }
.i22 { width: 22px; height: 22px; }
.i20 { width: 20px; height: 20px; }
.i18 { width: 18px; height: 18px; }
.i16 { width: 16px; height: 16px; }
.bl { margin-top: 5px; height: 14px; line-height: 14px; white-space: nowrap; }
.big .dn { margin-top: 5px; }
.b54 { width: 54px; } .b50 { width: 50px; } .b40 { width: 40px; } .b38 { width: 38px; } .b36 { width: 36px; }
.ml0b { margin-left: -2px; }
.ml1 { margin-left: 4px; }
.ml3 { margin-left: 3px; } .ml6 { margin-left: 6px; } .ml8 { margin-left: 8px; } .ml11 { margin-left: 5px; }
.ml4 { margin-left: 3px; }
.ml0 { margin-left: 0; }
.gallery { width: 98px; height: 66px; margin-left: 3px; border: 1px solid #dcdcdc; display: grid; grid-template-columns: repeat(3, 1fr); place-items: center; padding: 0 0; }
.gscroll { width: 22px; height: 66px; display: flex; flex-direction: column; align-items: center; justify-content: space-between; padding: 9px 0 11px; }
.dn.bar { position: relative; }
.dn.bar::before { content: ""; position: absolute; left: -4px; top: -7px; width: 8px; height: 1px; background: #333; }
.smalls { display: flex; flex-direction: column; gap: 8px; flex: none; }
.s72 { width: 72px; } .s62 { width: 62px; }
.sm { height: 14px; line-height: 14px; display: flex; align-items: center; gap: 2px; white-space: nowrap; }
.sm.wide { gap: 3px; }
.morebox { width: 38px; height: 34px; margin-top: -1px; margin-bottom: -1px; border: 1px solid #dcdcdc; border-radius: 5px; display: flex; align-items: center; justify-content: center; }
.irow { display: flex; height: 30px; align-items: center; }
.ic { width: 23px; height: 18px; }
.w10 .ic { height: 20px; }
.vs { width: 5px; height: 18px; background: linear-gradient(#dcdcdc, #dcdcdc) center / 1px 100% no-repeat; flex: none; }

/* tool bar */
.toolbar { height: 32px; flex: none; display: flex; align-items: center; background: #fff; border-bottom: 2px solid #999; padding-bottom: 0; }
.menuic { margin-left: 6px; }
.menutxt { margin-left: 2px; width: 42px; white-space: nowrap; font-size: 11px; }
.menutxt u { text-decoration: underline; }
.tsep { width: 1px; height: 22px; background: #dcdcdc; flex: none; }
.ml9 { margin-left: 5px; } .ml7 { margin-left: 7px; }
.combo { height: 21px; border: 1px solid #999; display: flex; align-items: center; justify-content: space-between; padding: 0 4px 0 1px; font-size: 11px; flex: none; }
.combo .dn { border-left-width: 4.5px; border-right-width: 4.5px; border-top-width: 5px; }
.c1 { width: 134px; margin-left: 11px; }
.c2 { width: 140px; margin-left: 9px; }
.tb { width: 24px; height: 22px; display: flex; align-items: center; justify-content: center; flex: none; }
.tb.ml1 { margin-left: 1px; } .tb.ml2 { margin-left: 2px; } .tb.ml3 { margin-left: 3px; } .tb.ml4 { margin-left: 4px; } .tb.ml8 { margin-left: 8px; }
.tb.w18 { width: 18px; } .tb.w14 { width: 14px; } .tb.w12 { width: 12px; }
.tb.hi { background: #cfe6ec; border: 1px solid #b2d6e0; }

/* main */
.main { flex: 1; min-height: 0; display: flex; }
.rail { width: 31px; flex: none; background: #dcdcdc; border-right: 1px solid #aaa; display: flex; flex-direction: column; }
.rg { height: 26px; display: flex; align-items: center; justify-content: center; padding-right: 2px; }
.ri { height: 41px; display: flex; align-items: center; justify-content: center; padding-right: 0; flex: none; }
.ri.top1 { margin-top: 17px; }
.ri.act { height: 45px; margin-left: 1px; margin-right: -1px; margin-top: -1px; background: #fff; border: 1px solid #aaa; border-right: 0; padding-right: 1px; }
.ri.t2 { margin-top: 10px; }
.ri.t3 { margin-top: 15px; }
.ri.t4 { margin-top: 13px; }
.ri.t5 { margin-top: 1px; }
.nav { width: 332px; flex: none; background: #fff; border-right: 1px solid #999; padding-left: 6px; display: flex; flex-direction: column; }
.navhead { height: 28px; flex: none; display: flex; align-items: center; justify-content: space-between; font-size: 12px; padding: 0 7px 0 4px; width: 316px; }
.maxi { width: 12px; height: 11px; border: 1px solid #222; border-top-width: 2px; margin-top: 2px; }
.treebox { width: 316px; height: 669px; flex: none; border: 1px solid #ccc; padding: 1px 1px 1px; display: flex; flex-direction: column; }
.thead { height: 21px; flex: none; display: flex; background: #f1f1f1; border-bottom: 1px solid #ddd; font-size: 12px; line-height: 20px; }
.c1h { width: 200px; padding-left: 6px; border-right: 1px solid #d8d8d8; display: flex; align-items: center; flex: none; }
.sortup { width: 0; height: 0; margin-left: 18px; border-left: 5px solid transparent; border-right: 5px solid transparent; border-bottom: 5px solid #222; }
.c2h { width: 100px; padding-left: 6px; border-right: 1px solid #d8d8d8; flex: none; }
.c3h { flex: 1; padding-left: 6px; overflow: hidden; white-space: nowrap; }
.rows { height: 627px; flex: none; overflow: hidden; }
.row { height: 20px; display: flex; border-bottom: 1px solid #ececec; }
.row:nth-child(even) { background: #f9f9f9; }
.cn { width: 200px; flex: none; border-right: 1px solid #ececec; display: flex; align-items: center; position: relative; padding-left: 5px; }
.cn.ch { padding-left: 40px; }
.cl { width: 100px; flex: none; border-right: 1px solid #ececec; display: flex; align-items: center; padding-left: 6px; }
.cx { flex: 1; }
.exp { width: 9px; height: 9px; border: 1px solid #bbb; background: #fff; font: 9px/7px "Liberation Mono", monospace; text-align: center; color: #222; flex: none; margin-right: 5px; position: relative; z-index: 1; }
.ti { width: 17px; height: 16px; flex: none; margin-right: 2px; }
.tchk { width: 13px; height: 11px; margin-left: 2px; margin-right: 1px; flex: none; }
.tt { font-size: 12px; white-space: nowrap; color: #222; word-spacing: 1px; }
.tt.strong { font-weight: 700; }
.cb { width: 13px; height: 13px; flex: none; }
.fi { width: 15px; height: 16px; margin-left: 2px; margin-right: 3px; flex: none; }
.ok { width: 14px; height: 12px; }
.tl { position: absolute; }
.tv0 { left: 9px; top: -1px; height: 21px; border-left: 1px dotted #999; }
.tv0.end { height: 10px; }
.tv1 { left: 28px; top: -1px; height: 21px; width: 12px; border-left: 1px dotted #999; background: linear-gradient(90deg, #999 50%, transparent 50%) 0 10px / 2px 1px repeat-x; }
.tv1.end { height: 11px; }
.hscroll { height: 16px; flex: none; display: flex; align-items: center; background: #f3f3f3; margin-top: 1px; }
.al { margin-left: 6px; border-top: 4px solid transparent; border-bottom: 4px solid transparent; border-right: 4px solid #333; width: 0; height: 0; }
.ar { margin-left: 69px; border-top: 4px solid transparent; border-bottom: 4px solid transparent; border-left: 4px solid #333; width: 0; height: 0; }
.thumb { width: 213px; height: 15px; margin-left: 8px; border: 1px solid #999; border-radius: 2px; background: linear-gradient(#f0f0f0, #bdbdbd); display: flex; align-items: center; justify-content: center; font: 8px/1 "Liberation Sans", sans-serif; color: #444; padding-left: 0; }
.split { width: 316px; height: 5px; flex: none; background: #dcdcdc; border: 1px solid #999; border-top: 1px solid #999; margin-top: 0; }
.sect { width: 316px; height: 24px; flex: none; border-bottom: 2px solid #ccc; display: flex; align-items: center; justify-content: space-between; padding: 1px 5px 0 7px; font-size: 14px; color: #1b7396; }
.chev { width: 12px; height: 10px; margin-top: -1px; fill: none; stroke: #0f7392; stroke-width: 2; }

/* work area */
.work { flex: 1; min-width: 0; display: flex; flex-direction: column; }
.ftabs { height: 23px; flex: none; display: flex; background: #fff; border-bottom: 2px solid #4f9db8; }
.ftab { width: 82px; height: 21px; display: flex; align-items: center; padding-left: 6px; gap: 4px; font: 13px "Liberation Sans", sans-serif; color: #222; flex: none; position: relative; }
.ftab.act { background: #4f9db8; color: #fff; }
.closex { width: 10px; height: 10px; margin-left: 6px; fill: none; stroke: #fff; stroke-width: 2; }
.view { flex: 1; min-height: 0; position: relative; background: linear-gradient(#b4b6b8 0%, #cfd0d2 45%, #e9eaec 100%); }
.scene { display: block; width: 100%; height: 100%; }
.edge path, .edge ellipse { fill: none; stroke: #3c3c30; stroke-width: .7; vector-effect: non-scaling-stroke; }
.edge path[fill="url(#wA)"] { fill: url(#wA); }
.edge path[fill="url(#wB)"] { fill: url(#wB); }
.edge path[fill="url(#wC)"] { fill: url(#wC); }
.edge path[fill="url(#wD)"] { fill: url(#wD); }
.edge ellipse[fill="url(#wH)"] { fill: url(#wH); }
.edge ellipse[fill="url(#wK)"] { fill: url(#wK); }
.floor ellipse { fill: #dcdde0; stroke: #3a5ae0; stroke-width: 2.2; vector-effect: non-scaling-stroke; }
.blue { fill: none; stroke: #3a5ae0; stroke-width: 1.400; vector-effect: non-scaling-stroke; }
.wcs path { fill: none; stroke: #d9d9d9; stroke-width: 1.100; vector-effect: non-scaling-stroke; }
.wb { fill: none; stroke: #1a1ae8; stroke-width: 1.200; vector-effect: non-scaling-stroke; }
.cone { fill: #e9e9e9; stroke: #999; stroke-width: .6; vector-effect: non-scaling-stroke; }
.ax-w { font: 14px "Liberation Sans", sans-serif; fill: #e2e2e2; }
.ax-b { font: 14px "Liberation Sans", sans-serif; fill: #1a1ae8; }
.water { position: absolute; right: 2px; bottom: 3px; font: 13.330px/18px "Liberation Mono", monospace; color: #666; white-space: nowrap; }
.water span { font: 14px/18px "Noto Sans CJK SC", sans-serif; font-weight: 300; letter-spacing: 2px; margin-right: -1px; }
```
